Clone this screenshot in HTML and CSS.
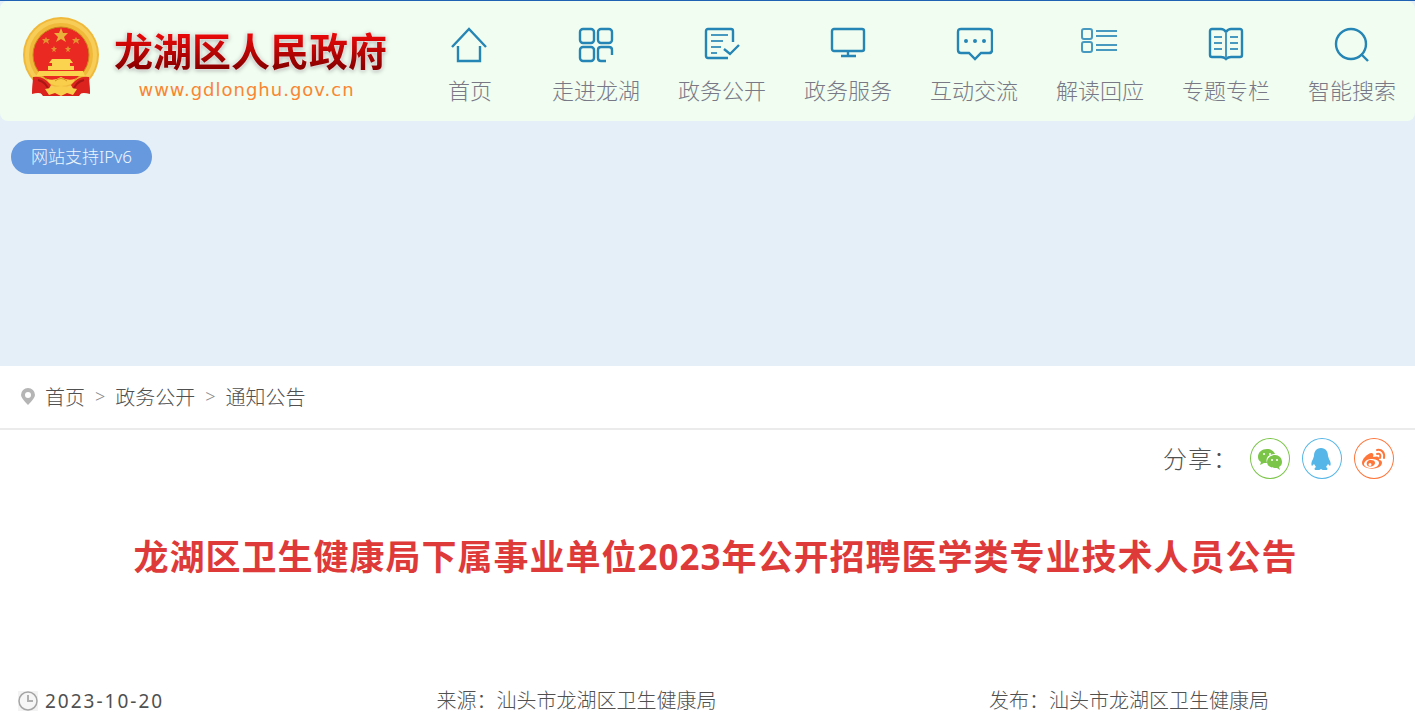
FILE: index.html
```html
<!DOCTYPE html>
<html lang="zh-CN">
<head>
  <meta charset="utf-8">
  <meta name="viewport" content="width=device-width, initial-scale=1">
  <title>龙湖区卫生健康局下属事业单位2023年公开招聘医学类专业技术人员公告</title>
  <link rel="stylesheet" href="styles.css">
</head>
<body>
  <div class="banner">
    <header class="header">
      <a class="logo" href="#">
        <svg class="emblem" viewBox="0 0 78 80" aria-hidden="true">
          <path d="M12 54L10 76l8-1 3 4h36l3-4 8 1-2-22z" fill="#d9201c"/>
          <circle cx="39" cy="38" r="38" fill="#f0b93a"/>
          <circle cx="39" cy="38" r="34" fill="none" stroke="#f7cd58" stroke-width="4"/>
          <circle cx="39" cy="38" r="28" fill="#ea2a22" stroke="#c98a1c"/>
          <path d="M39 11l2 5h5l-4 4 2 5-5-3-5 3 2-5-4-4h5z" fill="#e9b03a"/>
          <path d="M24 20l1 2h3l-2 2 1 3-3-2-3 2 1-3-2-2h3zM54 20l1 2h3l-2 2 1 3-3-2-3 2 1-3-2-2h3zM32 29l1 2h2l-2 2 1 2-2-1-2 1 1-2-2-2h2zM46 29l1 2h2l-2 2 1 2-2-1-2 1 1-2-2-2h2z" fill="#e3922f"/>
          <path d="M30 42h18l3 4h-3v3h4v4h-26v-4h4v-3h-3zM17 54h44l2 5H14z" fill="#fbd34f"/>
          <path d="M11 60q10-2 18 8l-6 11q-4-5-13-2z" fill="#dc231e"/>
          <path d="M67 60q-10-2-18 8l6 11q4-5 13-2z" fill="#dc231e"/>
          <path d="M16 63q9 2 11 12M62 63q-9 2-11 12" fill="none" stroke="#a91613" stroke-width="2"/>
          <path d="M25 62q8 2 14-2 6 4 14 2-2 7-14 7t-14-7zM23 72l16-3 16 3-4 6-6-2-6 3-6-3-6 2z" fill="#f8ce4b"/>
          <path d="M33 64q6-5 12 0" fill="none" stroke="#d29422"/>
        </svg>
        <span class="logo-text">
          <span class="logo-name">龙湖区人民政府</span>
          <span class="logo-url">www.gdlonghu.gov.cn</span>
        </span>
      </a>
      <nav class="nav">
        <a href="#">
          <svg viewBox="0 0 38 36"><path d="M1 20L18 2l17 18M7 19v15h22V19"/></svg>
          首页
        </a>
        <a href="#">
          <svg viewBox="0 0 38 36"><rect x="3" y="2" width="14" height="14" rx="3"/><rect x="21" y="2" width="14" height="14" rx="3"/><rect x="3" y="20" width="14" height="14" rx="3"/><path d="M29 34h-5q-3 0-3-3v-8q0-3 3-3h8q3 0 3 3v5"/></svg>
          走进龙湖
        </a>
        <a href="#">
          <svg viewBox="0 0 38 36"><path d="M25 31H5q-2 0-2-2V4q0-2 2-2h23q2 0 2 2v11M21 22l6 5 9-9"/><path class="thin" d="M8 8h17M8 14h12M8 20h10M8 26h6"/></svg>
          政务公开
        </a>
        <a href="#">
          <svg viewBox="0 0 38 36"><rect x="3" y="2" width="32" height="22" rx="2"/><path d="M19 24v5M12 29h15"/></svg>
          政务服务
        </a>
        <a href="#">
          <svg viewBox="0 0 38 36"><path d="M6 2h28q3 0 3 3v18q0 3-3 3h-8l-6 6-6-6H6q-3 0-3-3V5q0-3 3-3z"/><path class="dots" d="M11 14h0M20 14h0M29 14h0"/></svg>
          互动交流
        </a>
        <a href="#">
          <svg viewBox="0 0 38 36"><g class="thin"><rect x="1" y="2" width="10" height="10" rx="2"/><rect x="1" y="15" width="10" height="10" rx="2"/><path d="M15 4h21M15 9h21M15 18h21M15 23h21"/></g></svg>
          解读回应
        </a>
        <a href="#">
          <svg viewBox="0 0 38 36"><path d="M19 5q-2-3-5-3H5Q3 2 3 4v24q0 2 2 2h9q3 0 5 2 2-2 5-2h9q2 0 2-2V4q0-2-2-2h-9q-3 0-5 3z"/><path class="thin" d="M19 5v26M7 10h8M7 16h8M7 22h8M23 10h8M23 16h8M23 22h8"/></svg>
          专题专栏
        </a>
        <a href="#">
          <svg viewBox="0 0 38 36"><circle cx="18" cy="17" r="15"/><path d="M28 27l7 7"/></svg>
          智能搜索
        </a>
      </nav>
    </header>
    <a class="ipv6" href="#">网站支持IPv6</a>
  </div>

  <nav class="crumbs">
    <svg class="pin" viewBox="0 0 14 17" aria-hidden="true"><path d="M7 0a7 7 0 0 1 7 7q0 3-7 10Q0 10 0 7a7 7 0 0 1 7-7zm0 4a3 3 0 1 0 0 6 3 3 0 0 0 0-6z" fill="#b5b5b5" fill-rule="evenodd"/></svg>
    <a href="#">首页</a>
    <span class="sep">&gt;</span>
    <a href="#">政务公开</a>
    <span class="sep">&gt;</span>
    <a href="#">通知公告</a>
  </nav>

  <main class="article">
    <div class="share">
      <span class="share-label">分享：</span>
      <button class="share-btn wechat" type="button" aria-label="微信">
        <svg viewBox="0 0 24 24">
          <path d="M9 2C4 2 0 5 0 10c0 2 1 4 3 5l-1 3 4-2h3c-2-6 3-9 8-9-1-3-4-5-8-5z"/>
          <path d="M17 8c-4 0-8 3-8 7s4 6 8 6h2l3 2-1-3c2-1 3-3 3-5 0-4-3-7-7-7z"/>
          <g fill="#fff"><circle cx="6" cy="7" r="1"/><circle cx="12" cy="7" r="1"/><circle cx="14" cy="13" r="1"/><circle cx="19" cy="13" r="1"/></g>
        </svg>
      </button>
      <button class="share-btn qq" type="button" aria-label="QQ">
        <svg viewBox="0 0 24 24"><path d="M11 1c-5 0-7 4-7 8l-1 3c-2 3-2 6-1 7l2-2 2 3c-2 1-2 3 0 3 3 0 4 0 5-1 1 1 2 1 5 1 2 0 2-2 0-3l2-3 2 2c1-1 1-4-1-7l-1-3c0-4-2-8-7-8z"/></svg>
      </button>
      <button class="share-btn weibo" type="button" aria-label="微博">
        <svg viewBox="0 0 24 24">
          <path fill-rule="evenodd" d="M9 6C5 7 0 12 0 16c0 7 19 8 20 0 0-2-1-3-3-3 1-4-2-4-6-3 1-3 0-4-2-4zm0 6c4 0 8 1 8 4s-4 5-8 5-7-2-7-4 3-5 7-5z"/>
          <path fill-rule="evenodd" d="M9 13c-3 0-5 2-4 5 1 2 5 2 7 0s1-5-3-5zm-1 3a1 1 0 1 1 0 3 1 1 0 0 1 0-3z"/>
          <path d="M15 3c5-1 8 3 7 8M15 7c3-1 4 1 3 4" fill="none" stroke="currentColor" stroke-width="2" stroke-linecap="round"/>
        </svg>
      </button>
    </div>
    <h1 class="title">龙湖区卫生健康局下属事业单位2023年公开招聘医学类专业技术人员公告</h1>
    <div class="meta">
      <span class="date">
        <svg viewBox="0 0 20 20" aria-hidden="true"><rect width="20" height="20" fill="#f3f3f3"/><circle cx="10" cy="10" r="9" fill="#f6f6f6" stroke="#a5a5a5" stroke-width="1.5"/><path d="M10 4v6h5" fill="none" stroke="#b0b0b0" stroke-width="2"/></svg>
        2023-10-20
      </span>
      <span class="source">来源：汕头市龙湖区卫生健康局</span>
      <span class="publisher">发布：汕头市龙湖区卫生健康局</span>
    </div>
  </main>
</body>
</html>
```
FILE: styles.css
```css
* {
	box-sizing: border-box;
}

body {
	margin: 0;
	background: #fff;
	color: #505050;
	font-family: "Noto Sans", "Noto Sans CJK SC", sans-serif;
	font-size: 20px;
}

a {
	color: inherit;
	text-decoration: none;
}

/* top banner */
.banner {
	min-height: 366px;
	background: #e4eff8;
	border-top: 1px solid #1f62b4;
}

.header {
	display: flex;
	justify-content: space-between;
	height: 120px;
	background: #f0fdf0;
	border-radius: 8px;
}

.logo {
	display: flex;
	gap: 14px;
	padding: 16px 0 0 22px;
}

.emblem {
	width: 78px;
	height: 80px;
}

.logo-text {
	display: flex;
	flex-direction: column;
	align-items: center;
}

.logo-name {
	font-size: 39px;
	font-weight: bold;
	line-height: 68px;
	height: 63px;
	background: linear-gradient(#e60808 30%, #8c0000 80%);
	background-clip: text;
	-webkit-background-clip: text;
	color: transparent;
	filter: drop-shadow(0 0 1px #fff) drop-shadow(0 1px 2px #aaa);
}

.logo-url {
	padding-right: 8px;
	color: #fa8532;
	font-family: "DejaVu Sans", sans-serif;
	font-size: 18px;
	line-height: 20px;
	letter-spacing: 1px;
}

.nav {
	display: flex;
}

.nav a {
	display: flex;
	flex-direction: column;
	align-items: center;
	gap: 11px;
	width: 126px;
	padding-top: 26px;
	color: #787886;
	font-size: 22px;
	font-weight: 300;
	line-height: 32px;
}

.nav svg {
	width: 38px;
	height: 36px;
	fill: none;
	stroke: #2585b5;
	stroke-width: 2.4;
}

.nav .thin {
	stroke: #4799c0;
	stroke-width: 2;
}

.nav .dots {
	stroke-width: 4;
	stroke-linecap: round;
}

.ipv6 {
	display: inline-block;
	margin: 19px 11px;
	padding: 0 20px;
	border-radius: 17px;
	background: #6699de;
	color: #eef5ff;
	font-size: 17px;
	font-weight: 300;
	line-height: 34px;
}

/* breadcrumb */
.crumbs {
	display: flex;
	align-items: center;
	gap: 10px;
	height: 64px;
	padding: 0 21px 2px;
	border-bottom: 2px solid #ebebeb;
	font-weight: 300;
}

.pin {
	width: 14px;
	height: 17px;
}

.sep {
	color: #888;
	font-size: 18px;
}

/* article */
.share {
	display: flex;
	align-items: center;
	justify-content: flex-end;
	gap: 12px;
	padding: 8px 21px 0;
}

.share-label {
	font-size: 24px;
	font-weight: 300;
	line-height: 32px;
	letter-spacing: 1px;
}

.share-btn {
	display: flex;
	align-items: center;
	justify-content: center;
	width: 40px;
	height: 41px;
	padding: 0;
	border: 1px solid;
	border-radius: 50%;
	background: #fff;
}

.share-btn svg {
	width: 24px;
	height: 24px;
	fill: currentColor;
}

.wechat {
	color: #7bc549;
}

.qq {
	color: #56b6e7;
}

.weibo {
	color: #ff763b;
}

.title {
	margin: 0;
	padding: 51px 20px 0 36px;
	color: #de3a3a;
	font-size: 35px;
	line-height: 54px;
	letter-spacing: 1px;
	text-align: center;
}

.meta {
	display: flex;
	justify-content: space-between;
	padding: 102px 146px 0 18px;
	font-weight: 300;
	line-height: 30px;
}

.date {
	display: flex;
	align-items: center;
	gap: 7px;
	font-size: 19px;
	font-weight: 400;
	letter-spacing: 2px;
}

.date svg {
	width: 20px;
	height: 20px;
}
```
